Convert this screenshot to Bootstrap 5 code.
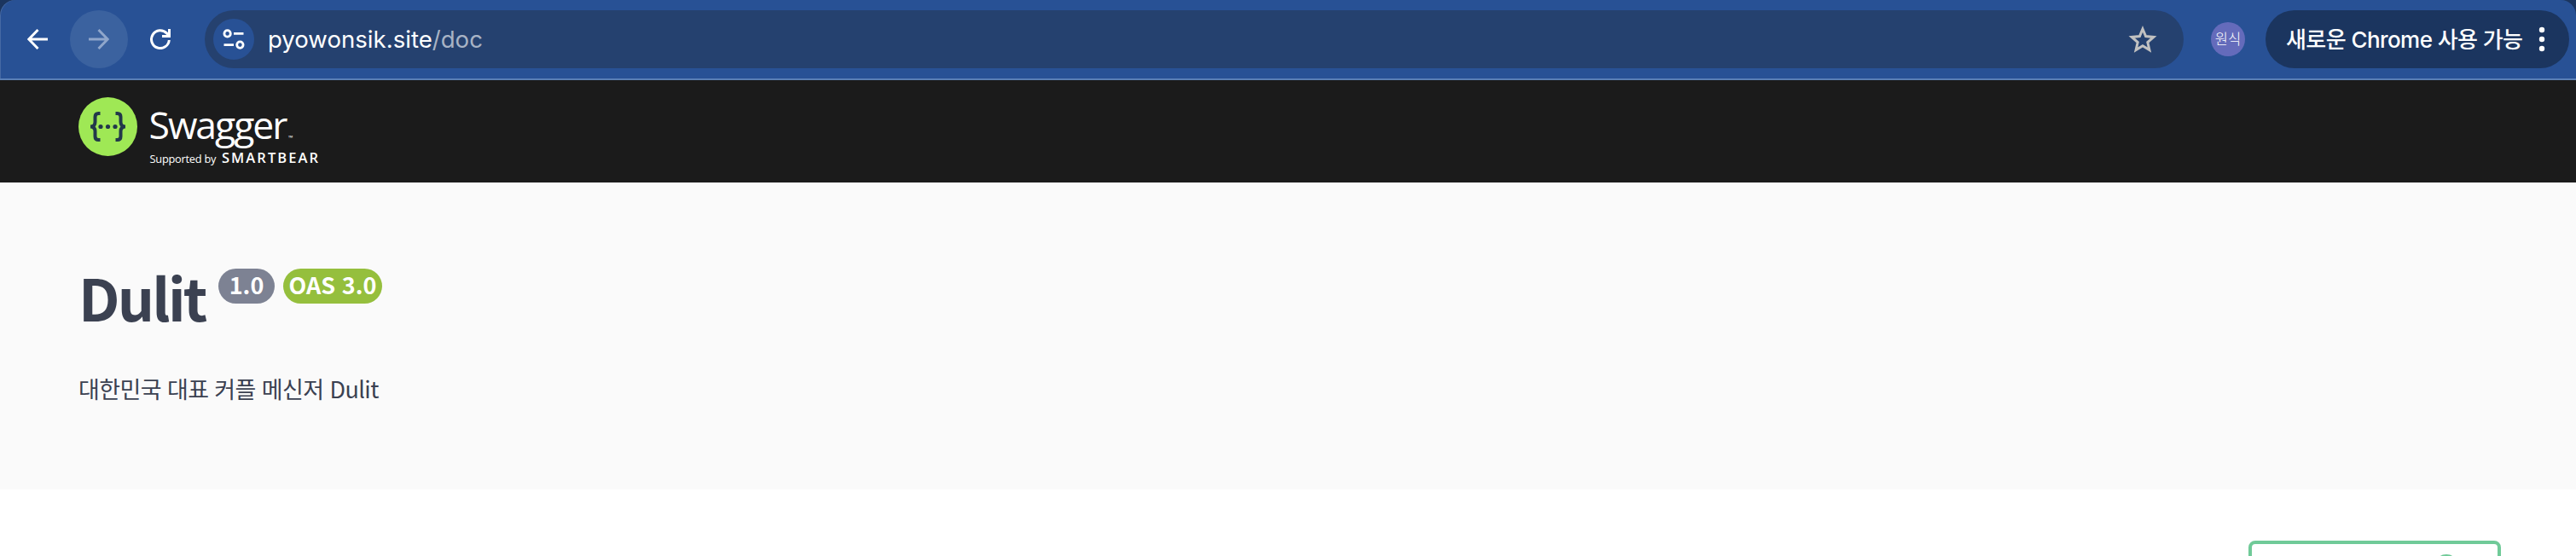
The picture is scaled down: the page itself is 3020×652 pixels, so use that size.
<!DOCTYPE html>
<html lang="ko">
<head>
<meta charset="utf-8">
<title>Dulit API</title>
<link href="https://cdn.jsdelivr.net/npm/bootstrap@5.3.0/dist/css/bootstrap.min.css" rel="stylesheet">
<style>
body{background:#fff;font-family:"Open Sans","Noto Sans CJK KR",sans-serif}
.frame{background:#1b355f}
.toolbar{height:94px;padding:12px 8px 12px 10px;background:#285195;border-bottom:2px solid #5a7fb5;border-radius:18px 18px 0 0;box-shadow:inset 1px 0 rgba(255,255,255,.14);font-family:Inter,"Noto Sans CJK KR",sans-serif}
.tools{gap:4px}
.tool{width:68px;height:68px}
.tool.off{background:#3b629f;color:#8fa6cb}
.omni{height:68px;margin-left:18px;padding:0 18px 0 10px;background:#25416f}
.site{width:48px;height:48px;background:#285195}
.url{font-size:27.6px;margin-left:16px;line-height:48px;white-space:nowrap}
.url .path{color:#a8b3c5}
.avatar{width:40px;height:40px;margin-left:32px;background:#646bbb;font-size:16.5px;font-weight:300}
.update{width:356px;height:68px;margin-left:24px;padding:0 28px 0 24px;background:#1b355f;font-size:26px;font-weight:500;letter-spacing:-.57px;white-space:nowrap}
.topbar{height:120px;padding:20px 92px 0;background:#1b1b1b}
.info{height:360px;padding:0 92px;background:#fafafa;color:#3b4151;font-family:"Noto Sans CJK KR",sans-serif}
.title{width:152px;font-size:68px;font-weight:700;line-height:80px;letter-spacing:-2.8px;padding-top:94px;white-space:nowrap}
.ver{height:41px;margin-top:101px;font-size:27px;font-weight:700;line-height:37px}
.ver-num{width:66px;margin-left:12px;background:#7d8293}
.ver-oas{width:116px;margin-left:10px;background:#95bf3d}
.desc{font-size:27px;line-height:40px;letter-spacing:-.6px;margin-top:48px}
.scheme{height:78px}
.auth{width:296px;height:80px;margin:60px 88px 0 auto;border:4px solid #70ca98;border-radius:8px;padding:12px 50px}
</style>
</head>
<body>
<div class="frame">
<nav class="toolbar d-flex align-items-center text-white">
<div class="tools d-flex">
<span class="tool d-flex align-items-center justify-content-center"><svg width="24" height="24" viewBox="0 0 24 24" fill="none" stroke="currentColor" stroke-width="3"><path d="M12.5 1 1.8 12l10.700 11M2 12h22"/></svg></span>
<span class="tool off rounded-circle d-flex align-items-center justify-content-center"><svg width="24" height="24" viewBox="0 0 24 24" fill="none" stroke="currentColor" stroke-width="3"><path d="M11.500 1l10.700 11-10.700 11M22 12H0"/></svg></span>
<span class="tool d-flex align-items-center justify-content-center"><svg width="24" height="24" viewBox="0 0 24 24" fill="none" stroke="currentColor" stroke-width="3"><path d="M22.300 13A10.400 10.400 0 1 1 19.400 4.900L22 7.600M22.500 0v8.500H14"/></svg></span>
</div>
<div class="omni flex-grow-1 rounded-pill d-flex align-items-center">
<span class="site rounded-circle d-flex align-items-center justify-content-center"><svg width="26" height="26" viewBox="-1 -1 26 26" fill="none" stroke="currentColor" stroke-width="2.800"><circle cx="4.600" cy="5.400" r="3.700"/><path d="M12 5.400h11.500M.5 18.600H12"/><circle cx="19.400" cy="18.600" r="3.700"/></svg></span>
<span class="url">pyowonsik.site<span class="path">/doc</span></span>
<svg class="ms-auto" width="60" height="40" viewBox="0 0 60 40" fill="none" stroke="#c1c1c1" stroke-width="3"><path d="M30 8l3.600 8.600 9.200.800-7 6.100 2.100 9-7.900-4.800-7.900 4.800 2.100-9-7-6.100 9.200-.800z"/></svg>
</div>
<span class="avatar rounded-circle d-flex align-items-center justify-content-center">원식</span>
<div class="update rounded-pill d-flex align-items-center justify-content-between"><span>새로운 Chrome 사용 가능</span>
<svg width="8" height="30" viewBox="0 0 8 30" fill="#fff"><circle cx="4" cy="4" r="3.200"/><circle cx="4" cy="15" r="3.200"/><circle cx="4" cy="26" r="3.200"/></svg></div>
</nav>
</div>
<header class="topbar">
<svg class="d-block" width="290" height="84" viewBox="92 114 290 84">
<circle cx="126.500" cy="148.500" r="34.500" fill="#9fe855"/>
<g fill="none" stroke="#22384a" stroke-width="4"><path d="M117.500 133h-2q-4 0-4 4v6q0 5.500-5.500 5.500q5.500 0 5.500 5.500v6q0 4 4 4h2M135.500 133h2q4 0 4 4v6q0 5.500 5.500 5.500q-5.500 0-5.500 5.500v6q0 4-4 4h-2"/></g>
<g fill="#22384a"><circle cx="118" cy="148.500" r="2.600"/><circle cx="126.500" cy="148.500" r="2.600"/><circle cx="135" cy="148.500" r="2.600"/></g>
<g fill="#fff" font-family="Open Sans"><text x="174.500" y="162.500" font-size="44.500" textLength="163">Swagger</text><text x="338" y="163.500" font-size="7">™</text><text x="175.500" y="191" font-size="12.800" textLength="78">Supported by</text><text x="260" y="191" font-size="16.500" font-weight="600" textLength="113">SMARTBEAR</text></g>
</svg>
</header>
<main class="info">
<div class="d-flex"><h1 class="title mb-0">Dulit</h1>
<span class="ver ver-num rounded-pill text-white text-center">1.0</span>
<span class="ver ver-oas rounded-pill text-white text-center">OAS 3.0</span></div>
<p class="desc mb-0">대한민국 대표 커플 메신저 Dulit</p>
</main>
<section class="scheme d-flex overflow-hidden"><div class="auth d-flex justify-content-end flex-shrink-0"><svg width="20" height="30" viewBox="0 0 20 30" fill="none" stroke="#70ca98" stroke-width="4"><path d="M2 14V9q0-7 8-7t8 7v5"/></svg></div></section>
</body>
</html>
